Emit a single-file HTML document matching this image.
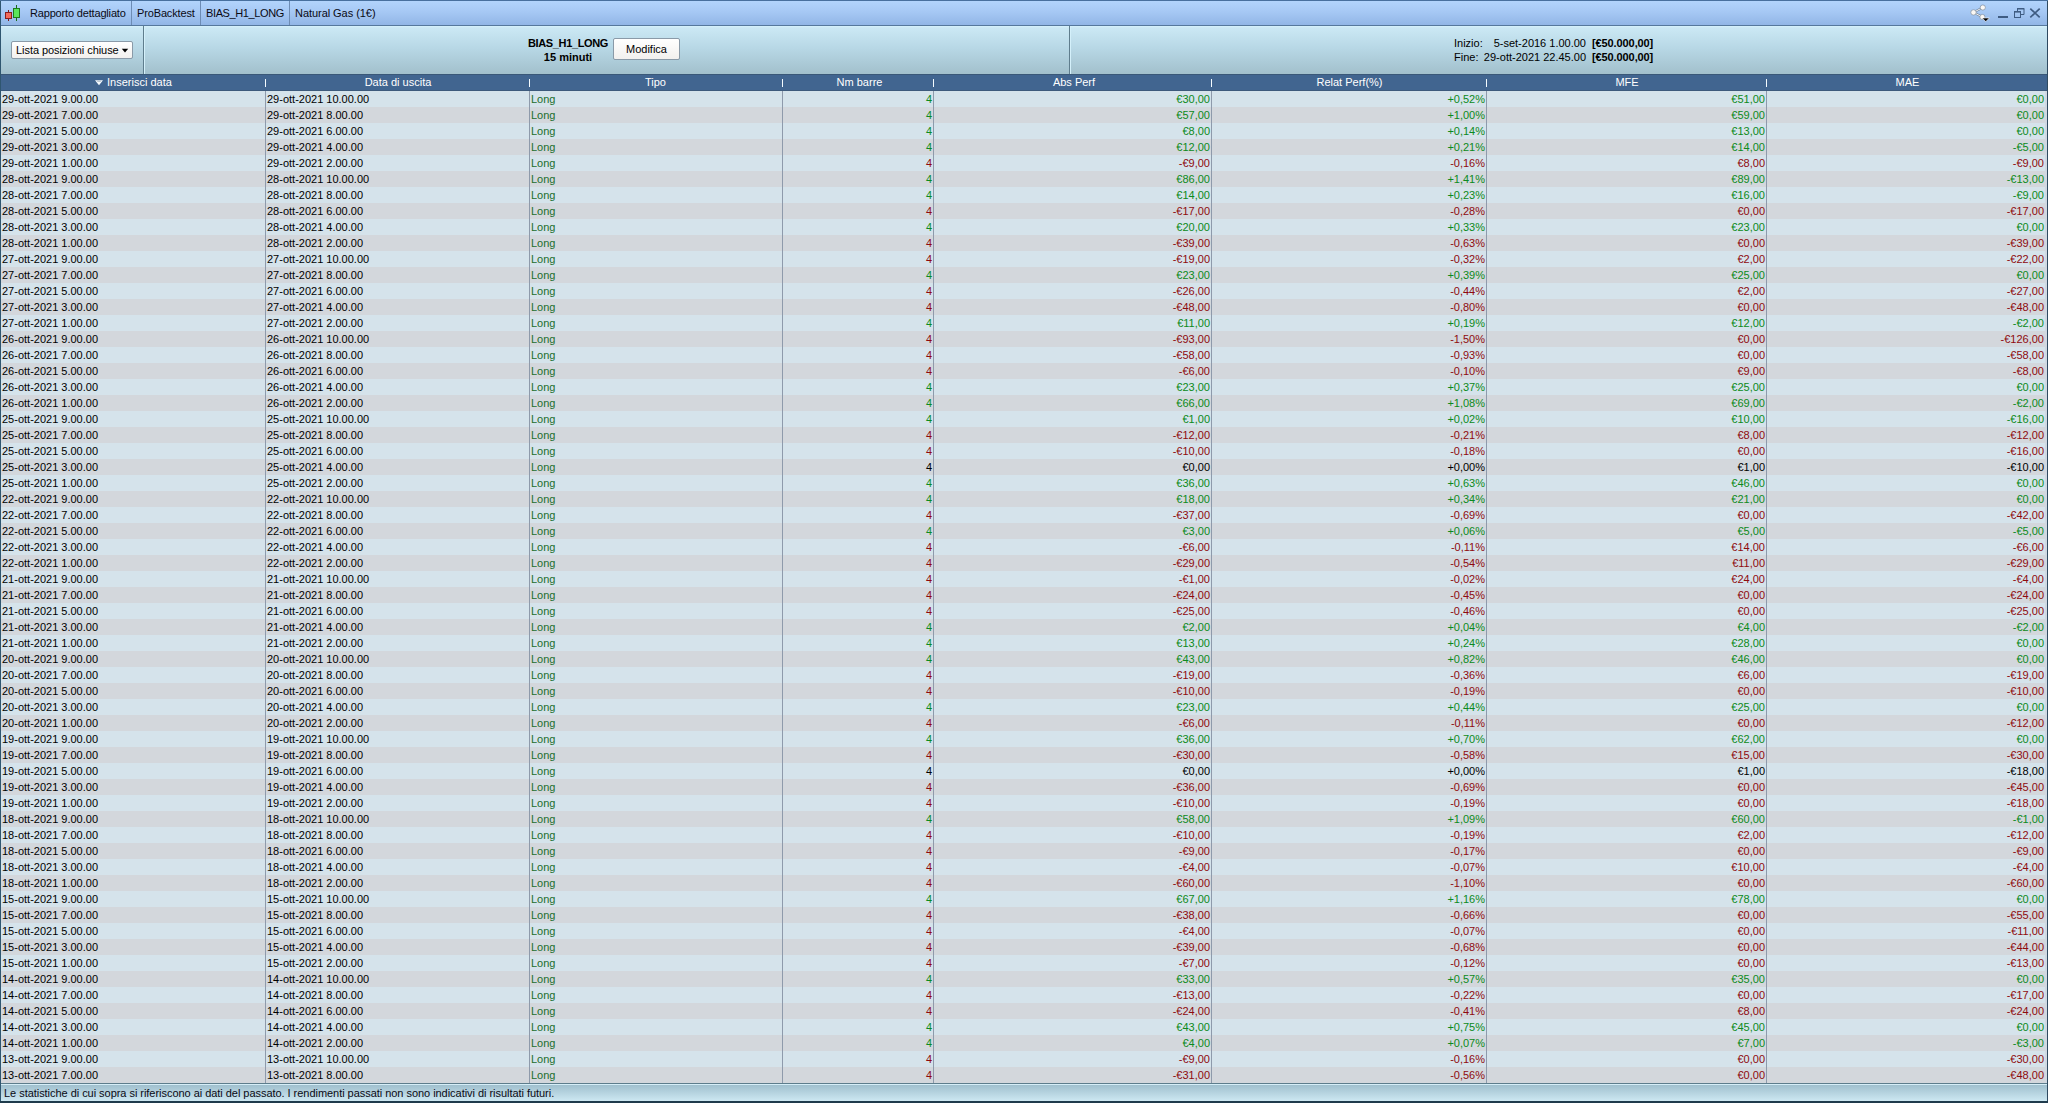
<!DOCTYPE html>
<html><head><meta charset="utf-8"><style>
html,body{margin:0;padding:0}
body{width:2048px;height:1103px;overflow:hidden;position:relative;background:#d6e4ec;font-family:"Liberation Sans",sans-serif;font-size:11px;color:#000}
div,span{box-sizing:border-box}
.abs{position:absolute}
#frameL{position:absolute;left:0;top:0;width:1px;height:1103px;background:#2f5670}
#frameR{position:absolute;left:2047px;top:0;width:1px;height:1103px;background:#2f4a60}
#frameT{position:absolute;left:0;top:0;width:2048px;height:1px;background:#48709e}
#title{position:absolute;left:1px;top:1px;width:2046px;height:24px;background:linear-gradient(#b2d4fc,#a6c8f4 45%,#92b6e6)}
#titleB{position:absolute;left:1px;top:25px;width:2046px;height:1px;background:#56789c}
.tsep{position:absolute;top:1px;width:1px;height:24px;background:#6d8cb4}
.ttxt{position:absolute;top:7px;line-height:12px;white-space:nowrap;color:#0a0a14}
#toolbar{position:absolute;left:1px;top:26px;width:2046px;height:48px;background:linear-gradient(#d6f2fc,#cbe8f4 2px,#b8d8e6 45%,#a2c0cc)}
.vsep{position:absolute;top:26px;width:1px;height:48px;background:#5f7d8d}
.vsepl{position:absolute;top:26px;width:1px;height:48px;background:#d4f0fa}
#header{position:absolute;left:1px;top:74px;width:2046px;height:17px;background:#416590;border-top:1px solid #3a5878;border-bottom:1px solid #3d5a7c}
.htxt{position:absolute;top:75px;line-height:14px;color:#fff;white-space:nowrap;text-align:center}
.hmark{position:absolute;top:79px;width:1px;height:8px;background:#f4fbff}
#rows{position:absolute;left:1px;top:0;width:2046px;height:0}
.row{position:absolute;left:0;width:2046px;height:16px;line-height:16px;white-space:nowrap}
.row.b{background:#d5e3eb}
.row.c{background:#d3d7dc}
.row span{position:absolute;top:0}
.t1{left:1px}
.t2{left:266px}
.t3{left:530px;color:#1b6e2c}
.n{text-align:right}
.n1{right:1115px}
.n2{right:837px}
.n3{right:562px}
.n4{right:282px}
.n5{right:3px}
.g .n{color:#0c8a20}
.r .n{color:#8e0a0e}
.k .n{color:#000}
.csep{position:absolute;top:91px;width:1px;height:992px;background:#8e9aab}
#footL1{position:absolute;left:1px;top:1083px;width:2046px;height:1px;background:#5d7d8c}
#footL2{position:absolute;left:1px;top:1084px;width:2046px;height:1px;background:#d6eef8}
#footer{position:absolute;left:1px;top:1085px;width:2046px;height:16px;background:linear-gradient(#a0c0ce,#cde8f2)}
#frameB{position:absolute;left:0;top:1101px;width:2048px;height:2px;background:#1f3b4c}
.ftxt{position:absolute;left:4px;letter-spacing:-0.04px;top:1087px;line-height:12px;color:#0a0a14;white-space:nowrap}
.btn{position:absolute;background:linear-gradient(#ffffff,#f2f0ee);border:1px solid #8a9aa8;border-radius:2px;color:#000;line-height:14px;white-space:nowrap}
.bold{font-weight:bold}

</style></head><body>
<div id="title"></div>
<div id="titleB"></div>
<div class="tsep" style="left:131px"></div>
<div class="tsep" style="left:200px"></div>
<div class="tsep" style="left:289px"></div>
<svg class="abs" style="left:4px;top:4px" width="18" height="18" viewBox="0 0 18 18">
 <line x1="4.5" y1="6" x2="4.5" y2="17" stroke="#7a1c1c" stroke-width="1"/>
 <rect x="1.5" y="8.5" width="6" height="6" fill="#f46a5a" stroke="#8a1e1e" stroke-width="1"/>
 <line x1="12.5" y1="1" x2="12.5" y2="17" stroke="#1a6e1a" stroke-width="1"/>
 <rect x="9.5" y="4.5" width="6" height="9" fill="#5be65b" stroke="#1f7a1f" stroke-width="1"/>
</svg>
<div class="ttxt" style="left:30px;letter-spacing:-0.17px">Rapporto dettagliato</div>
<div class="ttxt" style="left:137px;letter-spacing:-0.14px">ProBacktest</div>
<div class="ttxt" style="left:206px;letter-spacing:-0.38px">BIAS_H1_LONG</div>
<div class="ttxt" style="left:295px;letter-spacing:-0.05px">Natural Gas (1€)</div>
<div id="toolbar"></div>
<div class="vsep" style="left:143px"></div><div class="vsepl" style="left:144px"></div>
<div class="vsep" style="left:1069px"></div><div class="vsepl" style="left:1070px"></div>
<div class="btn" style="left:11px;top:41px;width:122px;height:18px"></div>
<div class="abs" style="left:16px;top:43px;line-height:14px;letter-spacing:-0.06px;white-space:nowrap">Lista posizioni chiuse</div>
<svg class="abs" style="left:121px;top:48px" width="8" height="5" viewBox="0 0 8 5"><path d="M0.8 0.8 H7.2 L4 4.4 Z" fill="#000"/></svg>
<div class="abs bold" style="left:500px;top:36px;width:136px;text-align:center;line-height:14px"><span style="letter-spacing:-0.35px">BIAS_H1_LONG</span><br>15 minuti</div>
<div class="btn" style="left:613px;top:38px;width:67px;height:22px;text-align:center;line-height:20px">Modifica</div>
<div class="abs" style="left:1454px;top:36px;line-height:14px">Inizio:</div>
<div class="abs" style="left:1454px;top:50px;line-height:14px">Fine:</div>
<div class="abs" style="left:1400px;width:186px;text-align:right;top:36px;line-height:14px">5-set-2016 1.00.00</div>
<div class="abs" style="left:1400px;width:186px;text-align:right;top:50px;line-height:14px">29-ott-2021 22.45.00</div>
<div class="abs bold" style="left:1592px;top:36px;line-height:14px;letter-spacing:-0.1px">[€50.000,00]</div>
<div class="abs bold" style="left:1592px;top:50px;line-height:14px;letter-spacing:-0.1px">[€50.000,00]</div>
<div id="header"></div>
<div class="htxt" style="left:107px">Inserisci data</div>
<svg class="abs" style="left:94px;top:79px" width="10" height="8" viewBox="0 0 10 8"><path d="M1 1.2 H9 L5 6.2 Z" fill="#f6fbff"/><path d="M3.2 2.3 H6.8" stroke="#9aa8b8" stroke-width="0.8"/></svg>
<div class="htxt" style="left:266px;width:264px">Data di uscita</div>
<div class="htxt" style="left:529px;width:253px">Tipo</div>
<div class="htxt" style="left:784px;width:151px">Nm barre</div>
<div class="htxt" style="left:935px;width:278px">Abs Perf</div>
<div class="htxt" style="left:1212px;width:275px">Relat Perf(%)</div>
<div class="htxt" style="left:1487px;width:280px">MFE</div>
<div class="htxt" style="left:1767px;width:281px">MAE</div>
<div class="hmark" style="left:265px"></div>
<div class="hmark" style="left:529px"></div>
<div class="hmark" style="left:782px"></div>
<div class="hmark" style="left:933px"></div>
<div class="hmark" style="left:1211px"></div>
<div class="hmark" style="left:1486px"></div>
<div class="hmark" style="left:1766px"></div>
<svg class="abs" style="left:1960px;top:0px" width="87" height="26" viewBox="0 0 87 26">
 <g stroke="#6f8296" stroke-width="2" fill="none">
  <line x1="13.5" y1="12.4" x2="22.8" y2="7.5"/>
  <line x1="13.5" y1="12.4" x2="22.4" y2="17"/>
 </g>
 <line x1="13.5" y1="12.4" x2="22.8" y2="7.5" stroke="#f4f4f4" stroke-width="1"/>
 <line x1="13.5" y1="12.4" x2="22.4" y2="17" stroke="#f4f4f4" stroke-width="1"/>
 <circle cx="22.8" cy="7.5" r="2.6" fill="#fbf8f4" stroke="#8a98a8" stroke-width="0.8"/>
 <circle cx="13.5" cy="12.4" r="2.7" fill="#fbf8f4" stroke="#8a98a8" stroke-width="0.8"/>
 <circle cx="22.4" cy="17" r="2.6" fill="#fbf8f4" stroke="#8a98a8" stroke-width="0.8"/>
 <path d="M22.2 18 L29.4 18 L25.8 21.6 Z" fill="#000" stroke="#fff" stroke-width="0.6"/>
 <rect x="38" y="16" width="10" height="2" fill="#3f5c82"/>
 <path d="M57.5 11.5 V8.5 H64 V14.5 H60.5" fill="none" stroke="#3f5c82" stroke-width="1"/>
 <rect x="57.2" y="8" width="7" height="1.5" fill="#3f5c82"/>
 <rect x="54.5" y="11.5" width="6" height="6" fill="none" stroke="#3f5c82" stroke-width="1"/>
 <rect x="54" y="11" width="7" height="1.6" fill="#3f5c82"/>
 <path d="M70.3 8.6 L79.7 17.4 M79.7 8.6 L70.3 17.4" stroke="#3f5c82" stroke-width="1.7"/>
</svg>

<div id="rows">
<div class="row b g" style="top:91px"><span class="t1">29-ott-2021 9.00.00</span><span class="t2">29-ott-2021 10.00.00</span><span class="t3">Long</span><span class="n n1">4</span><span class="n n2">€30,00</span><span class="n n3">+0,52%</span><span class="n n4">€51,00</span><span class="n n5">€0,00</span></div><div class="row c g" style="top:107px"><span class="t1">29-ott-2021 7.00.00</span><span class="t2">29-ott-2021 8.00.00</span><span class="t3">Long</span><span class="n n1">4</span><span class="n n2">€57,00</span><span class="n n3">+1,00%</span><span class="n n4">€59,00</span><span class="n n5">€0,00</span></div><div class="row b g" style="top:123px"><span class="t1">29-ott-2021 5.00.00</span><span class="t2">29-ott-2021 6.00.00</span><span class="t3">Long</span><span class="n n1">4</span><span class="n n2">€8,00</span><span class="n n3">+0,14%</span><span class="n n4">€13,00</span><span class="n n5">€0,00</span></div><div class="row c g" style="top:139px"><span class="t1">29-ott-2021 3.00.00</span><span class="t2">29-ott-2021 4.00.00</span><span class="t3">Long</span><span class="n n1">4</span><span class="n n2">€12,00</span><span class="n n3">+0,21%</span><span class="n n4">€14,00</span><span class="n n5">-€5,00</span></div><div class="row b r" style="top:155px"><span class="t1">29-ott-2021 1.00.00</span><span class="t2">29-ott-2021 2.00.00</span><span class="t3">Long</span><span class="n n1">4</span><span class="n n2">-€9,00</span><span class="n n3">-0,16%</span><span class="n n4">€8,00</span><span class="n n5">-€9,00</span></div><div class="row c g" style="top:171px"><span class="t1">28-ott-2021 9.00.00</span><span class="t2">28-ott-2021 10.00.00</span><span class="t3">Long</span><span class="n n1">4</span><span class="n n2">€86,00</span><span class="n n3">+1,41%</span><span class="n n4">€89,00</span><span class="n n5">-€13,00</span></div><div class="row b g" style="top:187px"><span class="t1">28-ott-2021 7.00.00</span><span class="t2">28-ott-2021 8.00.00</span><span class="t3">Long</span><span class="n n1">4</span><span class="n n2">€14,00</span><span class="n n3">+0,23%</span><span class="n n4">€16,00</span><span class="n n5">-€9,00</span></div><div class="row c r" style="top:203px"><span class="t1">28-ott-2021 5.00.00</span><span class="t2">28-ott-2021 6.00.00</span><span class="t3">Long</span><span class="n n1">4</span><span class="n n2">-€17,00</span><span class="n n3">-0,28%</span><span class="n n4">€0,00</span><span class="n n5">-€17,00</span></div><div class="row b g" style="top:219px"><span class="t1">28-ott-2021 3.00.00</span><span class="t2">28-ott-2021 4.00.00</span><span class="t3">Long</span><span class="n n1">4</span><span class="n n2">€20,00</span><span class="n n3">+0,33%</span><span class="n n4">€23,00</span><span class="n n5">€0,00</span></div><div class="row c r" style="top:235px"><span class="t1">28-ott-2021 1.00.00</span><span class="t2">28-ott-2021 2.00.00</span><span class="t3">Long</span><span class="n n1">4</span><span class="n n2">-€39,00</span><span class="n n3">-0,63%</span><span class="n n4">€0,00</span><span class="n n5">-€39,00</span></div><div class="row b r" style="top:251px"><span class="t1">27-ott-2021 9.00.00</span><span class="t2">27-ott-2021 10.00.00</span><span class="t3">Long</span><span class="n n1">4</span><span class="n n2">-€19,00</span><span class="n n3">-0,32%</span><span class="n n4">€2,00</span><span class="n n5">-€22,00</span></div><div class="row c g" style="top:267px"><span class="t1">27-ott-2021 7.00.00</span><span class="t2">27-ott-2021 8.00.00</span><span class="t3">Long</span><span class="n n1">4</span><span class="n n2">€23,00</span><span class="n n3">+0,39%</span><span class="n n4">€25,00</span><span class="n n5">€0,00</span></div><div class="row b r" style="top:283px"><span class="t1">27-ott-2021 5.00.00</span><span class="t2">27-ott-2021 6.00.00</span><span class="t3">Long</span><span class="n n1">4</span><span class="n n2">-€26,00</span><span class="n n3">-0,44%</span><span class="n n4">€2,00</span><span class="n n5">-€27,00</span></div><div class="row c r" style="top:299px"><span class="t1">27-ott-2021 3.00.00</span><span class="t2">27-ott-2021 4.00.00</span><span class="t3">Long</span><span class="n n1">4</span><span class="n n2">-€48,00</span><span class="n n3">-0,80%</span><span class="n n4">€0,00</span><span class="n n5">-€48,00</span></div><div class="row b g" style="top:315px"><span class="t1">27-ott-2021 1.00.00</span><span class="t2">27-ott-2021 2.00.00</span><span class="t3">Long</span><span class="n n1">4</span><span class="n n2">€11,00</span><span class="n n3">+0,19%</span><span class="n n4">€12,00</span><span class="n n5">-€2,00</span></div><div class="row c r" style="top:331px"><span class="t1">26-ott-2021 9.00.00</span><span class="t2">26-ott-2021 10.00.00</span><span class="t3">Long</span><span class="n n1">4</span><span class="n n2">-€93,00</span><span class="n n3">-1,50%</span><span class="n n4">€0,00</span><span class="n n5">-€126,00</span></div><div class="row b r" style="top:347px"><span class="t1">26-ott-2021 7.00.00</span><span class="t2">26-ott-2021 8.00.00</span><span class="t3">Long</span><span class="n n1">4</span><span class="n n2">-€58,00</span><span class="n n3">-0,93%</span><span class="n n4">€0,00</span><span class="n n5">-€58,00</span></div><div class="row c r" style="top:363px"><span class="t1">26-ott-2021 5.00.00</span><span class="t2">26-ott-2021 6.00.00</span><span class="t3">Long</span><span class="n n1">4</span><span class="n n2">-€6,00</span><span class="n n3">-0,10%</span><span class="n n4">€9,00</span><span class="n n5">-€8,00</span></div><div class="row b g" style="top:379px"><span class="t1">26-ott-2021 3.00.00</span><span class="t2">26-ott-2021 4.00.00</span><span class="t3">Long</span><span class="n n1">4</span><span class="n n2">€23,00</span><span class="n n3">+0,37%</span><span class="n n4">€25,00</span><span class="n n5">€0,00</span></div><div class="row c g" style="top:395px"><span class="t1">26-ott-2021 1.00.00</span><span class="t2">26-ott-2021 2.00.00</span><span class="t3">Long</span><span class="n n1">4</span><span class="n n2">€66,00</span><span class="n n3">+1,08%</span><span class="n n4">€69,00</span><span class="n n5">-€2,00</span></div><div class="row b g" style="top:411px"><span class="t1">25-ott-2021 9.00.00</span><span class="t2">25-ott-2021 10.00.00</span><span class="t3">Long</span><span class="n n1">4</span><span class="n n2">€1,00</span><span class="n n3">+0,02%</span><span class="n n4">€10,00</span><span class="n n5">-€16,00</span></div><div class="row c r" style="top:427px"><span class="t1">25-ott-2021 7.00.00</span><span class="t2">25-ott-2021 8.00.00</span><span class="t3">Long</span><span class="n n1">4</span><span class="n n2">-€12,00</span><span class="n n3">-0,21%</span><span class="n n4">€8,00</span><span class="n n5">-€12,00</span></div><div class="row b r" style="top:443px"><span class="t1">25-ott-2021 5.00.00</span><span class="t2">25-ott-2021 6.00.00</span><span class="t3">Long</span><span class="n n1">4</span><span class="n n2">-€10,00</span><span class="n n3">-0,18%</span><span class="n n4">€0,00</span><span class="n n5">-€16,00</span></div><div class="row c k" style="top:459px"><span class="t1">25-ott-2021 3.00.00</span><span class="t2">25-ott-2021 4.00.00</span><span class="t3">Long</span><span class="n n1">4</span><span class="n n2">€0,00</span><span class="n n3">+0,00%</span><span class="n n4">€1,00</span><span class="n n5">-€10,00</span></div><div class="row b g" style="top:475px"><span class="t1">25-ott-2021 1.00.00</span><span class="t2">25-ott-2021 2.00.00</span><span class="t3">Long</span><span class="n n1">4</span><span class="n n2">€36,00</span><span class="n n3">+0,63%</span><span class="n n4">€46,00</span><span class="n n5">€0,00</span></div><div class="row c g" style="top:491px"><span class="t1">22-ott-2021 9.00.00</span><span class="t2">22-ott-2021 10.00.00</span><span class="t3">Long</span><span class="n n1">4</span><span class="n n2">€18,00</span><span class="n n3">+0,34%</span><span class="n n4">€21,00</span><span class="n n5">€0,00</span></div><div class="row b r" style="top:507px"><span class="t1">22-ott-2021 7.00.00</span><span class="t2">22-ott-2021 8.00.00</span><span class="t3">Long</span><span class="n n1">4</span><span class="n n2">-€37,00</span><span class="n n3">-0,69%</span><span class="n n4">€0,00</span><span class="n n5">-€42,00</span></div><div class="row c g" style="top:523px"><span class="t1">22-ott-2021 5.00.00</span><span class="t2">22-ott-2021 6.00.00</span><span class="t3">Long</span><span class="n n1">4</span><span class="n n2">€3,00</span><span class="n n3">+0,06%</span><span class="n n4">€5,00</span><span class="n n5">-€5,00</span></div><div class="row b r" style="top:539px"><span class="t1">22-ott-2021 3.00.00</span><span class="t2">22-ott-2021 4.00.00</span><span class="t3">Long</span><span class="n n1">4</span><span class="n n2">-€6,00</span><span class="n n3">-0,11%</span><span class="n n4">€14,00</span><span class="n n5">-€6,00</span></div><div class="row c r" style="top:555px"><span class="t1">22-ott-2021 1.00.00</span><span class="t2">22-ott-2021 2.00.00</span><span class="t3">Long</span><span class="n n1">4</span><span class="n n2">-€29,00</span><span class="n n3">-0,54%</span><span class="n n4">€11,00</span><span class="n n5">-€29,00</span></div><div class="row b r" style="top:571px"><span class="t1">21-ott-2021 9.00.00</span><span class="t2">21-ott-2021 10.00.00</span><span class="t3">Long</span><span class="n n1">4</span><span class="n n2">-€1,00</span><span class="n n3">-0,02%</span><span class="n n4">€24,00</span><span class="n n5">-€4,00</span></div><div class="row c r" style="top:587px"><span class="t1">21-ott-2021 7.00.00</span><span class="t2">21-ott-2021 8.00.00</span><span class="t3">Long</span><span class="n n1">4</span><span class="n n2">-€24,00</span><span class="n n3">-0,45%</span><span class="n n4">€0,00</span><span class="n n5">-€24,00</span></div><div class="row b r" style="top:603px"><span class="t1">21-ott-2021 5.00.00</span><span class="t2">21-ott-2021 6.00.00</span><span class="t3">Long</span><span class="n n1">4</span><span class="n n2">-€25,00</span><span class="n n3">-0,46%</span><span class="n n4">€0,00</span><span class="n n5">-€25,00</span></div><div class="row c g" style="top:619px"><span class="t1">21-ott-2021 3.00.00</span><span class="t2">21-ott-2021 4.00.00</span><span class="t3">Long</span><span class="n n1">4</span><span class="n n2">€2,00</span><span class="n n3">+0,04%</span><span class="n n4">€4,00</span><span class="n n5">-€2,00</span></div><div class="row b g" style="top:635px"><span class="t1">21-ott-2021 1.00.00</span><span class="t2">21-ott-2021 2.00.00</span><span class="t3">Long</span><span class="n n1">4</span><span class="n n2">€13,00</span><span class="n n3">+0,24%</span><span class="n n4">€28,00</span><span class="n n5">€0,00</span></div><div class="row c g" style="top:651px"><span class="t1">20-ott-2021 9.00.00</span><span class="t2">20-ott-2021 10.00.00</span><span class="t3">Long</span><span class="n n1">4</span><span class="n n2">€43,00</span><span class="n n3">+0,82%</span><span class="n n4">€46,00</span><span class="n n5">€0,00</span></div><div class="row b r" style="top:667px"><span class="t1">20-ott-2021 7.00.00</span><span class="t2">20-ott-2021 8.00.00</span><span class="t3">Long</span><span class="n n1">4</span><span class="n n2">-€19,00</span><span class="n n3">-0,36%</span><span class="n n4">€6,00</span><span class="n n5">-€19,00</span></div><div class="row c r" style="top:683px"><span class="t1">20-ott-2021 5.00.00</span><span class="t2">20-ott-2021 6.00.00</span><span class="t3">Long</span><span class="n n1">4</span><span class="n n2">-€10,00</span><span class="n n3">-0,19%</span><span class="n n4">€0,00</span><span class="n n5">-€10,00</span></div><div class="row b g" style="top:699px"><span class="t1">20-ott-2021 3.00.00</span><span class="t2">20-ott-2021 4.00.00</span><span class="t3">Long</span><span class="n n1">4</span><span class="n n2">€23,00</span><span class="n n3">+0,44%</span><span class="n n4">€25,00</span><span class="n n5">€0,00</span></div><div class="row c r" style="top:715px"><span class="t1">20-ott-2021 1.00.00</span><span class="t2">20-ott-2021 2.00.00</span><span class="t3">Long</span><span class="n n1">4</span><span class="n n2">-€6,00</span><span class="n n3">-0,11%</span><span class="n n4">€0,00</span><span class="n n5">-€12,00</span></div><div class="row b g" style="top:731px"><span class="t1">19-ott-2021 9.00.00</span><span class="t2">19-ott-2021 10.00.00</span><span class="t3">Long</span><span class="n n1">4</span><span class="n n2">€36,00</span><span class="n n3">+0,70%</span><span class="n n4">€62,00</span><span class="n n5">€0,00</span></div><div class="row c r" style="top:747px"><span class="t1">19-ott-2021 7.00.00</span><span class="t2">19-ott-2021 8.00.00</span><span class="t3">Long</span><span class="n n1">4</span><span class="n n2">-€30,00</span><span class="n n3">-0,58%</span><span class="n n4">€15,00</span><span class="n n5">-€30,00</span></div><div class="row b k" style="top:763px"><span class="t1">19-ott-2021 5.00.00</span><span class="t2">19-ott-2021 6.00.00</span><span class="t3">Long</span><span class="n n1">4</span><span class="n n2">€0,00</span><span class="n n3">+0,00%</span><span class="n n4">€1,00</span><span class="n n5">-€18,00</span></div><div class="row c r" style="top:779px"><span class="t1">19-ott-2021 3.00.00</span><span class="t2">19-ott-2021 4.00.00</span><span class="t3">Long</span><span class="n n1">4</span><span class="n n2">-€36,00</span><span class="n n3">-0,69%</span><span class="n n4">€0,00</span><span class="n n5">-€45,00</span></div><div class="row b r" style="top:795px"><span class="t1">19-ott-2021 1.00.00</span><span class="t2">19-ott-2021 2.00.00</span><span class="t3">Long</span><span class="n n1">4</span><span class="n n2">-€10,00</span><span class="n n3">-0,19%</span><span class="n n4">€0,00</span><span class="n n5">-€18,00</span></div><div class="row c g" style="top:811px"><span class="t1">18-ott-2021 9.00.00</span><span class="t2">18-ott-2021 10.00.00</span><span class="t3">Long</span><span class="n n1">4</span><span class="n n2">€58,00</span><span class="n n3">+1,09%</span><span class="n n4">€60,00</span><span class="n n5">-€1,00</span></div><div class="row b r" style="top:827px"><span class="t1">18-ott-2021 7.00.00</span><span class="t2">18-ott-2021 8.00.00</span><span class="t3">Long</span><span class="n n1">4</span><span class="n n2">-€10,00</span><span class="n n3">-0,19%</span><span class="n n4">€2,00</span><span class="n n5">-€12,00</span></div><div class="row c r" style="top:843px"><span class="t1">18-ott-2021 5.00.00</span><span class="t2">18-ott-2021 6.00.00</span><span class="t3">Long</span><span class="n n1">4</span><span class="n n2">-€9,00</span><span class="n n3">-0,17%</span><span class="n n4">€0,00</span><span class="n n5">-€9,00</span></div><div class="row b r" style="top:859px"><span class="t1">18-ott-2021 3.00.00</span><span class="t2">18-ott-2021 4.00.00</span><span class="t3">Long</span><span class="n n1">4</span><span class="n n2">-€4,00</span><span class="n n3">-0,07%</span><span class="n n4">€10,00</span><span class="n n5">-€4,00</span></div><div class="row c r" style="top:875px"><span class="t1">18-ott-2021 1.00.00</span><span class="t2">18-ott-2021 2.00.00</span><span class="t3">Long</span><span class="n n1">4</span><span class="n n2">-€60,00</span><span class="n n3">-1,10%</span><span class="n n4">€0,00</span><span class="n n5">-€60,00</span></div><div class="row b g" style="top:891px"><span class="t1">15-ott-2021 9.00.00</span><span class="t2">15-ott-2021 10.00.00</span><span class="t3">Long</span><span class="n n1">4</span><span class="n n2">€67,00</span><span class="n n3">+1,16%</span><span class="n n4">€78,00</span><span class="n n5">€0,00</span></div><div class="row c r" style="top:907px"><span class="t1">15-ott-2021 7.00.00</span><span class="t2">15-ott-2021 8.00.00</span><span class="t3">Long</span><span class="n n1">4</span><span class="n n2">-€38,00</span><span class="n n3">-0,66%</span><span class="n n4">€0,00</span><span class="n n5">-€55,00</span></div><div class="row b r" style="top:923px"><span class="t1">15-ott-2021 5.00.00</span><span class="t2">15-ott-2021 6.00.00</span><span class="t3">Long</span><span class="n n1">4</span><span class="n n2">-€4,00</span><span class="n n3">-0,07%</span><span class="n n4">€0,00</span><span class="n n5">-€11,00</span></div><div class="row c r" style="top:939px"><span class="t1">15-ott-2021 3.00.00</span><span class="t2">15-ott-2021 4.00.00</span><span class="t3">Long</span><span class="n n1">4</span><span class="n n2">-€39,00</span><span class="n n3">-0,68%</span><span class="n n4">€0,00</span><span class="n n5">-€44,00</span></div><div class="row b r" style="top:955px"><span class="t1">15-ott-2021 1.00.00</span><span class="t2">15-ott-2021 2.00.00</span><span class="t3">Long</span><span class="n n1">4</span><span class="n n2">-€7,00</span><span class="n n3">-0,12%</span><span class="n n4">€0,00</span><span class="n n5">-€13,00</span></div><div class="row c g" style="top:971px"><span class="t1">14-ott-2021 9.00.00</span><span class="t2">14-ott-2021 10.00.00</span><span class="t3">Long</span><span class="n n1">4</span><span class="n n2">€33,00</span><span class="n n3">+0,57%</span><span class="n n4">€35,00</span><span class="n n5">€0,00</span></div><div class="row b r" style="top:987px"><span class="t1">14-ott-2021 7.00.00</span><span class="t2">14-ott-2021 8.00.00</span><span class="t3">Long</span><span class="n n1">4</span><span class="n n2">-€13,00</span><span class="n n3">-0,22%</span><span class="n n4">€0,00</span><span class="n n5">-€17,00</span></div><div class="row c r" style="top:1003px"><span class="t1">14-ott-2021 5.00.00</span><span class="t2">14-ott-2021 6.00.00</span><span class="t3">Long</span><span class="n n1">4</span><span class="n n2">-€24,00</span><span class="n n3">-0,41%</span><span class="n n4">€8,00</span><span class="n n5">-€24,00</span></div><div class="row b g" style="top:1019px"><span class="t1">14-ott-2021 3.00.00</span><span class="t2">14-ott-2021 4.00.00</span><span class="t3">Long</span><span class="n n1">4</span><span class="n n2">€43,00</span><span class="n n3">+0,75%</span><span class="n n4">€45,00</span><span class="n n5">€0,00</span></div><div class="row c g" style="top:1035px"><span class="t1">14-ott-2021 1.00.00</span><span class="t2">14-ott-2021 2.00.00</span><span class="t3">Long</span><span class="n n1">4</span><span class="n n2">€4,00</span><span class="n n3">+0,07%</span><span class="n n4">€7,00</span><span class="n n5">-€3,00</span></div><div class="row b r" style="top:1051px"><span class="t1">13-ott-2021 9.00.00</span><span class="t2">13-ott-2021 10.00.00</span><span class="t3">Long</span><span class="n n1">4</span><span class="n n2">-€9,00</span><span class="n n3">-0,16%</span><span class="n n4">€0,00</span><span class="n n5">-€30,00</span></div><div class="row c r" style="top:1067px"><span class="t1">13-ott-2021 7.00.00</span><span class="t2">13-ott-2021 8.00.00</span><span class="t3">Long</span><span class="n n1">4</span><span class="n n2">-€31,00</span><span class="n n3">-0,56%</span><span class="n n4">€0,00</span><span class="n n5">-€48,00</span></div>
</div>
<div class="csep" style="left:265px"></div>
<div class="csep" style="left:529px"></div>
<div class="csep" style="left:782px"></div>
<div class="csep" style="left:933px"></div>
<div class="csep" style="left:1211px"></div>
<div class="csep" style="left:1486px"></div>
<div class="csep" style="left:1766px"></div>
<div class="abs" style="left:2045px;top:91px;width:2px;height:992px;background:#d0d8e2"></div>
<div id="footL1"></div>
<div id="footL2"></div>
<div id="footer"></div>
<div class="ftxt">Le statistiche di cui sopra si riferiscono ai dati del passato. I rendimenti passati non sono indicativi di risultati futuri.</div>
<div id="frameL"></div>
<div id="frameR"></div>
<div id="frameT"></div>
<div id="frameB"></div>

</body></html>
